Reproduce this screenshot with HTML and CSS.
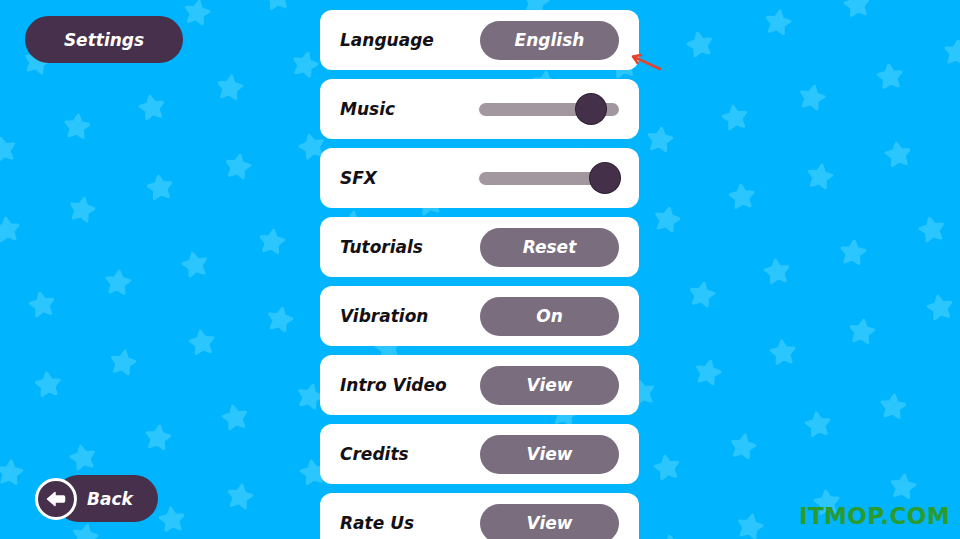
FILE: index.html
```html
<!DOCTYPE html>
<html lang="en">
<head>
    <meta charset="UTF-8">
    <meta name="viewport" content="width=device-width, initial-scale=1.0">
    <title>Settings</title>
    <link rel="stylesheet" href="styles.css">
</head>
<body>

<svg class="stars" width="960" height="539" viewBox="0 0 960 539">
    <defs>
        <polygon id="star" points="0,-12 3.53,-4.85 11.41,-3.71 5.71,1.85 7.05,9.71 0,6 -7.05,9.71 -5.71,1.85 -11.41,-3.71 -3.53,-4.85"/>
    </defs>
    <g class="star-field">
        <!-- left side -->
        <use href="#star" transform="translate(197 13) rotate(10)"/>
        <use href="#star" transform="translate(277 -2) rotate(-8)"/>
        <use href="#star" transform="translate(37 62) rotate(12)"/>
        <use href="#star" transform="translate(114 41) rotate(-6)"/>
        <use href="#star" transform="translate(305 65) rotate(14)"/>
        <use href="#star" transform="translate(230 88) rotate(8)"/>
        <use href="#star" transform="translate(152 108) rotate(-10)"/>
        <use href="#star" transform="translate(77 127) rotate(6)"/>
        <use href="#star" transform="translate(3 150) rotate(-12)"/>
        <use href="#star" transform="translate(312 147) rotate(-14)"/>
        <use href="#star" transform="translate(238 167) rotate(10)"/>
        <use href="#star" transform="translate(160 188) rotate(-8)"/>
        <use href="#star" transform="translate(82 210) rotate(12)"/>
        <use href="#star" transform="translate(7 230) rotate(-6)"/>
        <use href="#star" transform="translate(272 242) rotate(8)"/>
        <use href="#star" transform="translate(195 265) rotate(-12)"/>
        <use href="#star" transform="translate(118 283) rotate(6)"/>
        <use href="#star" transform="translate(42 305) rotate(-10)"/>
        <use href="#star" transform="translate(280 320) rotate(12)"/>
        <use href="#star" transform="translate(202 343) rotate(-8)"/>
        <use href="#star" transform="translate(123 363) rotate(10)"/>
        <use href="#star" transform="translate(48 385) rotate(-6)"/>
        <use href="#star" transform="translate(310 397) rotate(14)"/>
        <use href="#star" transform="translate(235 418) rotate(-10)"/>
        <use href="#star" transform="translate(158 438) rotate(8)"/>
        <use href="#star" transform="translate(83 458) rotate(-12)"/>
        <use href="#star" transform="translate(10 473) rotate(6)"/>
        <use href="#star" transform="translate(313 473) rotate(-8)"/>
        <use href="#star" transform="translate(240 497) rotate(10)"/>
        <use href="#star" transform="translate(172 520) rotate(-6)"/>
        <use href="#star" transform="translate(85 537) rotate(12)"/>
        <!-- middle, mostly under the cards -->
        <use href="#star" transform="translate(382 44) rotate(8)"/>
        <use href="#star" transform="translate(459 23) rotate(-8)"/>
        <use href="#star" transform="translate(536 2) rotate(10)"/>
        <use href="#star" transform="translate(623 66) rotate(-10)"/>
        <use href="#star" transform="translate(545 84) rotate(6)"/>
        <use href="#star" transform="translate(583 161) rotate(-6)"/>
        <use href="#star" transform="translate(506 182) rotate(12)"/>
        <use href="#star" transform="translate(429 203) rotate(-12)"/>
        <use href="#star" transform="translate(352 224) rotate(8)"/>
        <use href="#star" transform="translate(590 241) rotate(-8)"/>
        <use href="#star" transform="translate(565 414) rotate(10)"/>
        <use href="#star" transform="translate(388 348) rotate(-10)"/>
        <!-- right side -->
        <use href="#star" transform="translate(857 5) rotate(-8)"/>
        <use href="#star" transform="translate(778 23) rotate(10)"/>
        <use href="#star" transform="translate(700 45) rotate(-12)"/>
        <use href="#star" transform="translate(957 53) rotate(6)"/>
        <use href="#star" transform="translate(890 77) rotate(-6)"/>
        <use href="#star" transform="translate(812 98) rotate(12)"/>
        <use href="#star" transform="translate(735 118) rotate(-10)"/>
        <use href="#star" transform="translate(660 140) rotate(8)"/>
        <use href="#star" transform="translate(898 155) rotate(-8)"/>
        <use href="#star" transform="translate(820 177) rotate(10)"/>
        <use href="#star" transform="translate(742 197) rotate(-6)"/>
        <use href="#star" transform="translate(667 220) rotate(12)"/>
        <use href="#star" transform="translate(932 230) rotate(-12)"/>
        <use href="#star" transform="translate(853 253) rotate(6)"/>
        <use href="#star" transform="translate(777 272) rotate(-8)"/>
        <use href="#star" transform="translate(702 295) rotate(10)"/>
        <use href="#star" transform="translate(940 308) rotate(-10)"/>
        <use href="#star" transform="translate(862 332) rotate(8)"/>
        <use href="#star" transform="translate(783 353) rotate(-6)"/>
        <use href="#star" transform="translate(708 373) rotate(12)"/>
        <use href="#star" transform="translate(642 393) rotate(-12)"/>
        <use href="#star" transform="translate(893 407) rotate(6)"/>
        <use href="#star" transform="translate(818 425) rotate(-8)"/>
        <use href="#star" transform="translate(743 447) rotate(10)"/>
        <use href="#star" transform="translate(667 468) rotate(-10)"/>
        <use href="#star" transform="translate(903 487) rotate(8)"/>
        <use href="#star" transform="translate(827 503) rotate(-6)"/>
        <use href="#star" transform="translate(750 527) rotate(12)"/>
        <use href="#star" transform="translate(672 548) rotate(-12)"/>
    </g>
</svg>

<div class="screen">
    <aside class="side">
        <div class="title-pill">Settings</div>
        <button class="back-btn">
            <span class="back-icon">
                <svg width="20" height="16" viewBox="0 0 20 16">
                    <path d="M1.5 8 L9 1.5 L9 5 L17.5 5 Q18.5 5 18.5 6 L18.5 10 Q18.5 11 17.5 11 L9 11 L9 14.5 Z" fill="#fff" stroke="#fff" stroke-width="1.5" stroke-linejoin="round"/>
                </svg>
            </span>
            <span class="back-label">Back</span>
        </button>
    </aside>

    <main class="settings-list">
        <div class="row">
            <span class="row-label">Language</span>
            <button class="pill-btn">English</button>
        </div>
        <div class="row">
            <span class="row-label">Music</span>
            <div class="slider">
                <span class="thumb" style="left: 80%"></span>
            </div>
        </div>
        <div class="row">
            <span class="row-label">SFX</span>
            <div class="slider">
                <span class="thumb" style="left: 90%"></span>
            </div>
        </div>
        <div class="row">
            <span class="row-label">Tutorials</span>
            <button class="pill-btn">Reset</button>
        </div>
        <div class="row">
            <span class="row-label">Vibration</span>
            <button class="pill-btn">On</button>
        </div>
        <div class="row">
            <span class="row-label">Intro Video</span>
            <button class="pill-btn">View</button>
        </div>
        <div class="row">
            <span class="row-label">Credits</span>
            <button class="pill-btn">View</button>
        </div>
        <div class="row">
            <span class="row-label">Rate Us</span>
            <button class="pill-btn">View</button>
        </div>
    </main>
</div>

<svg class="pointer" width="40" height="26" viewBox="0 0 40 26">
    <path d="M32 19 L6 7" stroke="#e5432d" stroke-width="2.5" stroke-linecap="round" fill="none"/>
    <path d="M13 5 L5 6.5 L9.5 13" stroke="#e5432d" stroke-width="2.5" stroke-linecap="round" stroke-linejoin="round" fill="none"/>
</svg>

<div class="watermark">ITMOP.COM</div>

</body>
</html>
```

FILE: styles.css
```css
body {
    margin: 0;
    width: 960px;
    height: 539px;
    overflow: hidden;
    position: relative;
    background-color: #00b4fe;
    font-family: 'DejaVu Sans', sans-serif;
}

.stars {
    position: absolute;
    left: 0;
    top: 0;
}

.star-field use {
    fill: #2cc6fe;
    stroke: #2cc6fe;
    stroke-width: 3;
    stroke-linejoin: round;
}

.screen {
    position: relative;
    display: grid;
    grid-template-columns: 320px 320px 1fr;
    grid-template-rows: 539px;
    height: 539px;
}

.side {
    display: flex;
    flex-direction: column;
    justify-content: space-between;
    align-items: flex-start;
    padding: 16px 0 17px 25px;
}

.title-pill {
    width: 158px;
    height: 47px;
    border-radius: 24px;
    background-color: #46304b;
    color: #fff;
    font-size: 17px;
    font-weight: bold;
    font-style: italic;
    display: flex;
    align-items: center;
    justify-content: center;
}

.back-btn {
    display: flex;
    align-items: center;
    margin-left: 10px;
    padding: 0;
    border: none;
    background: none;
    font-family: inherit;
    cursor: pointer;
}

.back-icon {
    position: relative;
    z-index: 1;
    width: 36px;
    height: 36px;
    border: 3px solid #fff;
    border-radius: 50%;
    background-color: #46304b;
    display: flex;
    align-items: center;
    justify-content: center;
}

.back-label {
    margin-left: -22px;
    height: 47px;
    padding: 0 25px 0 32px;
    border-radius: 24px;
    background-color: #46304b;
    color: #fff;
    font-size: 17px;
    font-weight: bold;
    font-style: italic;
    display: flex;
    align-items: center;
}

.settings-list {
    display: flex;
    flex-direction: column;
    gap: 9px;
    padding-top: 10px;
    overflow: hidden;
}

.row {
    flex: none;
    height: 60px;
    width: 319px;
    box-sizing: border-box;
    padding: 0 20px;
    background-color: #fff;
    border-radius: 12px;
    display: flex;
    align-items: center;
    justify-content: space-between;
}

.row-label {
    font-size: 17px;
    font-weight: bold;
    font-style: italic;
    color: #141014;
}

.pill-btn {
    width: 139px;
    height: 39px;
    border: none;
    border-radius: 20px;
    background-color: #7a6d7d;
    color: #fff;
    font-family: inherit;
    font-size: 17px;
    font-weight: bold;
    font-style: italic;
    cursor: pointer;
}

.slider {
    position: relative;
    width: 140px;
    height: 13px;
    border-radius: 7px;
    background-color: #a2969f;
}

.thumb {
    position: absolute;
    top: 50%;
    width: 30px;
    height: 30px;
    border-radius: 50%;
    background-color: #45304a;
    box-shadow: 0 0 0 1px #2f2033;
    transform: translate(-50%, -50%);
}

.pointer {
    position: absolute;
    left: 628px;
    top: 50px;
}

.watermark {
    position: absolute;
    right: 10px;
    bottom: 10px;
    color: #2a9b2c;
    font-size: 23px;
    letter-spacing: 0.4px;
    font-weight: bold;
}
```
